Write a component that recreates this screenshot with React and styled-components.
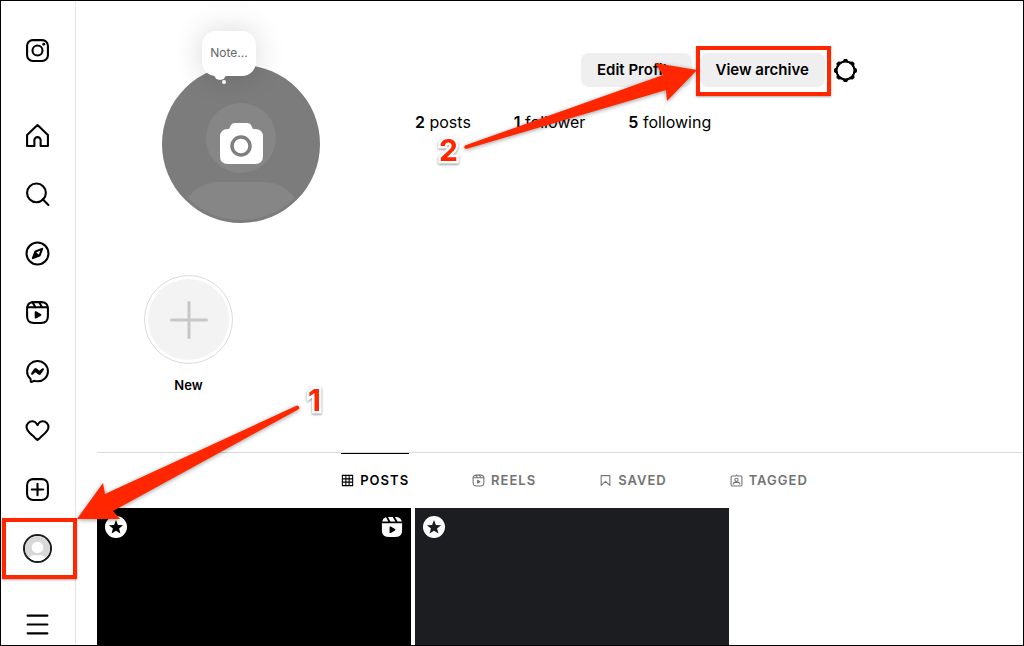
import React from "react";
import styled, {createGlobalStyle, css} from "styled-components";


const GlobalStyle = createGlobalStyle`
  * {
    box-sizing: border-box;
  }

  body {
    margin: 0;
    background: #fff;
    color: #000;
    font-family: Inter, "Liberation Sans", sans-serif;
    font-size: 14px;
  }

  svg {
    display: block;
  }
`

const Page = styled.div`
  position: relative;
  display: flex;
  height: 100vh;
  border: 1px solid #000;
  overflow: hidden;
`

const Sidebar = styled.nav`
  display: flex;
  flex-direction: column;
  flex: none;
  width: 75px;
  padding-right: 1px;
  border-right: 1px solid #e6e6e6;
`

const NavLink = styled.a`
  position: relative;
  display: flex;
  flex: none;
  align-items: center;
  justify-content: center;
  height: 59px;
  color: #000;
`

const LogoLink = styled(NavLink)`
  margin: 20px 0 26px;
`

const MenuButton = styled.button`
  display: flex;
  justify-content: center;
  margin-top: 34px;
  padding: 0;
  border: 0;
  background: none;
  color: #000;
`

const NavAvatar = styled.span`
  display: block;
  width: 29px;
  height: 29px;
  border: 2px solid #1c1c1c;
  border-radius: 50%;
  overflow: hidden;
`

const Highlight = styled.span`
  position: absolute;
  inset: ${props => props.$inset};
  border: 4px solid #ff2600;
  box-shadow: 0 1px 2px rgba(0, 0, 0, 0.35);
  pointer-events: none;
`

const Main = styled.main`
  display: flex;
  flex-direction: column;
  flex: 1;
  min-width: 0;
  padding-left: 21px;
`

const ProfileHeader = styled.header`
  display: flex;
  gap: 95px;
  padding: 52px 0 0 65px;
`

const AvatarButton = styled.button`
  position: relative;
  flex: none;
  width: 158px;
  height: 158px;
  margin-top: 12px;
  padding: 0;
  border: 0;
  border-radius: 50%;
  background: #7c7c7c;
`

const Note = styled.span`
  position: absolute;
  top: -34px;
  left: 40px;
  display: flex;
  align-items: center;
  justify-content: center;
  width: 54px;
  height: 45px;
  padding-bottom: 2px;
  border-radius: 14px;
  background: #fff;
  box-shadow: 0 0 30px rgba(0, 0, 0, 0.16);
  color: #666;
  font-family: Inter, "Liberation Sans", sans-serif;
  font-size: 12px;

  &::before,
  &::after {
    content: "";
    position: absolute;
    border-radius: 50%;
    background: #fff;
  }

  &::before {
    left: 12px;
    bottom: -4px;
    width: 12px;
    height: 12px;
  }

  &::after {
    left: 20px;
    bottom: -8px;
    width: 4px;
    height: 4px;
  }
`

const Info = styled.section`
  display: flex;
  flex-direction: column;
  gap: 25px;
`

const Actions = styled.div`
  display: flex;
  align-items: center;
  gap: 8px;
  padding-left: 166px;
`

const ActionButton = styled.button`
  position: relative;
  height: 34px;
  padding: 0 16px 1px;
  border: 0;
  border-radius: 8px;
  background: #efefef;
  color: #000;
  font-family: Inter, "Liberation Sans", sans-serif;
  font-size: 15px;
  font-weight: 600;
  white-space: nowrap;
`

const IconButton = styled.button`
  padding: 0;
  border: 0;
  background: none;
  color: #000;
`

const Stats = styled.ul`
  display: flex;
  gap: 43px;
  margin: 0;
  padding: 0;
  list-style: none;
  font-size: 16px;
  line-height: 20px;
  white-space: nowrap;

  b {
    font-weight: 600;
  }
`

const Highlights = styled.section`
  display: flex;
  padding: 52px 0 58px 47px;
`

const NewHighlight = styled.button`
  display: flex;
  flex-direction: column;
  align-items: center;
  gap: 12px;
  padding: 0;
  border: 0;
  background: none;
  color: #000;
  font-family: Inter, "Liberation Sans", sans-serif;
  font-size: 13px;
  font-weight: 600;
  line-height: 18px;
`

const Ring = styled.span`
  display: flex;
  align-items: center;
  justify-content: center;
  width: 89px;
  height: 89px;
  border: 1px solid #dbdbdb;
  border-radius: 50%;
`

const RingFill = styled.span`
  display: flex;
  align-items: center;
  justify-content: center;
  width: 81px;
  height: 81px;
  border-radius: 50%;
  background: #f3f3f3;
`

const Tabs = styled.div`
  display: flex;
  justify-content: center;
  gap: 63px;
  padding-left: 29px;
  border-top: 1px solid #dbdbdb;
`

const Tab = styled.a`
  display: flex;
  align-items: center;
  gap: 6px;
  height: 55px;
  padding-bottom: 2px;
  border-top: 1px solid transparent;
  color: #737373;
  font-size: 13px;
  font-weight: 600;
  letter-spacing: 1px;
  text-decoration: none;

  ${props => props.$active && css`
    border-top-color: #000;
    color: #000;
  `}
`

const Posts = styled.div`
  display: grid;
  grid-template-columns: repeat(3, 314px);
  gap: 4px;
`

const Post = styled.a`
  display: flex;
  align-items: flex-start;
  justify-content: space-between;
  aspect-ratio: 1;
  padding: 8px;
  background: ${props => props.$color};
  color: #fff;
`

const Arrows = styled.svg`
  position: absolute;
  top: -1px;
  left: -1px;
  pointer-events: none;
  filter: drop-shadow(0 1px 2px rgba(0, 0, 0, 0.4));
`

const Step = styled.span`
  position: absolute;
  top: ${props => props.$top}px;
  left: ${props => props.$left}px;
  color: #ff2600;
  font-family: Inter, "Liberation Sans", sans-serif;
  font-size: 30px;
  font-weight: 700;
  line-height: 30px;
  -webkit-text-stroke: 5px #fff;
  paint-order: stroke fill;
  filter: drop-shadow(0 1px 1px rgba(0, 0, 0, 0.45));
`

const Icon = ({size = 25, stroke = 2, children}) => (
    <svg width={size} height={size} viewBox="0 0 24 24" fill="none" stroke="currentColor"
         strokeWidth={stroke} strokeLinecap="round" strokeLinejoin="round" aria-hidden="true">
        {children}
    </svg>
);

const LogoIcon = () => (
    <Icon>
        <rect x="2" y="2" width="20" height="20" rx="5.5"/>
        <circle cx="12" cy="12" r="4.8"/>
        <circle cx="18" cy="6" r="1.4" fill="currentColor" stroke="none"/>
    </Icon>
);

const HomeIcon = () => (
    <Icon>
        <path d="M9.005 16.545a2.997 2.997 0 0 1 2.997-2.997A2.997 2.997 0 0 1 15 16.545V22h7V11.543L12 2 2 11.543V22h7.005Z"/>
    </Icon>
);

const SearchIcon = () => (
    <Icon>
        <path d="M20 10.500A9 9 0 1 1 11 1.500a9 9 0 0 1 9 9Z"/>
        <path d="M17 16.500 22.500 22"/>
    </Icon>
);

const ExploreIcon = () => (
    <Icon>
        <path d="M13.941 13.953 7.581 16.424 10.06 10.056 16.42 7.585Z"/>
        <path d="M10.06 10.056 13.949 13.945 7.581 16.424Z" fill="currentColor" stroke="none"/>
        <circle cx="12" cy="12" r="10.5"/>
    </Icon>
);

const ReelsIcon = ({size, stroke}) => (
    <Icon size={size} stroke={stroke}>
        <path d="M2.049 7.002h19.901M13.504 2.001l2.858 5.001M7.207 2.11l2.795 4.892"/>
        <path d="M2 12.001v3.449c0 2.849.698 4.006 1.606 4.945.94.908 2.098 1.607 4.946 1.607h6.896c2.848 0 4.006-.699 4.946-1.607.908-.939 1.606-2.096 1.606-4.945V8.552c0-2.848-.698-4.006-1.606-4.945C19.454 2.699 18.296 2 15.448 2H8.552c-2.848 0-4.006.699-4.946 1.607C2.698 4.546 2 5.704 2 8.552Z"/>
        <path d="M9.763 17.664a.908.908 0 0 1-.454-.787V11.63a.909.909 0 0 1 1.364-.788l4.545 2.624a.909.909 0 0 1 0 1.575l-4.545 2.624a.91.91 0 0 1-.91 0Z"
              fill="currentColor" stroke="none"/>
    </Icon>
);

const MessengerIcon = () => (
    <Icon stroke={1.9}>
        <path d="M12.003 2.001a9.705 9.705 0 1 1 0 19.4 10.876 10.876 0 0 1-2.895-.384.798.798 0 0 0-.533.04l-1.984.876a.801.801 0 0 1-1.123-.708l-.054-1.78a.806.806 0 0 0-.27-.569 9.49 9.49 0 0 1-3.14-7.175 9.65 9.65 0 0 1 10-9.7Z"/>
        <path d="M17.79 10.132a.659.659 0 0 0-.962-.873l-2.556 2.05a.63.63 0 0 1-.758.002L11.06 9.47a1.576 1.576 0 0 0-2.277.42l-2.567 3.98a.659.659 0 0 0 .961.875l2.556-2.049a.63.63 0 0 1 .759-.002l2.452 1.84a1.576 1.576 0 0 0 2.278-.42Z"
              fill="currentColor" strokeWidth="0.8"/>
    </Icon>
);

const HeartIcon = () => (
    <Icon>
        <path d="M16.792 3.104A5.5 5.5 0 0 1 22.5 8.822c0 3.072-2.952 5.559-5.497 7.822-2.512 2.243-4.565 4.169-5.003 4.452-.477-.309-2.843-2.523-5.003-4.452C4.441 14.372 1.5 11.867 1.5 8.822a5.5 5.5 0 0 1 5.708-5.718 4.21 4.21 0 0 1 3.675 1.941c.84 1.175.98 1.763 1.12 1.763s.278-.588 1.11-1.766a4.17 4.17 0 0 1 3.679-1.938Z"/>
    </Icon>
);

const CreateIcon = () => (
    <Icon>
        <rect x="2" y="2" width="20" height="20" rx="5.8"/>
        <path d="M6.545 12h10.91M12 6.545v10.91"/>
    </Icon>
);

const ProfileIcon = () => (
    <svg width="25" height="25" viewBox="0 0 26 26" aria-hidden="true">
        <rect width="26" height="26" fill="#d8d8d8"/>
        <circle cx="13" cy="12" r="6" fill="#fff"/>
        <path d="M5 26v-3q1-3 4-3h8q3 0 4 3v3Z" fill="#fff"/>
    </svg>
);

const MenuIcon = () => (
    <Icon>
        <path d="M2.500 3.5h19M2.500 12h19M2.500 20.5h19"/>
    </Icon>
);

const GearIcon = () => (
    <Icon>
        <circle cx="12" cy="12" r="8.635"/>
        <path d="M14.232 3.656a1.269 1.269 0 0 1-.796-.66L12.93 2h-1.86l-.505.996a1.269 1.269 0 0 1-.796.66m-.001 16.688a1.269 1.269 0 0 1 .796.66l.505.996h1.862l.505-.996a1.269 1.269 0 0 1 .796-.66M3.656 9.768a1.269 1.269 0 0 1-.66.796L2 11.07v1.862l.996.505a1.269 1.269 0 0 1 .66.796m16.688-.001a1.269 1.269 0 0 1 .66-.796L22 12.93v-1.86l-.996-.505a1.269 1.269 0 0 1-.66-.796M7.678 4.522a1.269 1.269 0 0 1-1.03.096l-1.06-.348L4.27 5.587l.348 1.062a1.269 1.269 0 0 1-.096 1.03m11.8 11.799a1.269 1.269 0 0 1 1.03-.096l1.06.348 1.318-1.317-.348-1.062a1.269 1.269 0 0 1 .096-1.03m-14.956.001a1.269 1.269 0 0 1 .096 1.03l-.348 1.06 1.317 1.318 1.062-.348a1.269 1.269 0 0 1 1.03.096m11.799-11.8a1.269 1.269 0 0 1-.096-1.03l.348-1.06-1.317-1.318-1.062.348a1.269 1.269 0 0 1-1.03-.096"/>
    </Icon>
);

const GridIcon = () => (
    <Icon size={13}>
        <path d="M2.500 2.500h19v19h-19zM2.500 9h19M2.500 15h19M9 2.500v19M15 2.500v19"/>
    </Icon>
);

const SavedIcon = () => (
    <Icon size={13}>
        <path d="M20 21 12 13.44 4 21V3h16Z"/>
    </Icon>
);

const TaggedIcon = () => (
    <Icon size={13}>
        <path d="M10.2 3.8 12 2l1.8 1.8H20a2 2 0 0 1 2 2V20a2 2 0 0 1-2 2H4a2 2 0 0 1-2-2V5.8a2 2 0 0 1 2-2Z"/>
        <circle cx="12" cy="10.8" r="3"/>
        <path d="M6 18.5c0-2 1.5-3 3.2-3h5.6c1.7 0 3.2 1 3.2 3"/>
    </Icon>
);

const StarIcon = ({color}) => (
    <svg width="22" height="22" viewBox="0 0 22 22" aria-hidden="true">
        <circle cx="11" cy="11" r="11" fill="#fff"/>
        <path d="M11 4l1.9 4.9 5.2.3-4 3.3 1.3 5.1-4.4-2.8-4.4 2.8 1.3-5.1-4-3.3 5.2-.3Z" fill={color}/>
    </svg>
);

const ClipIcon = () => (
    <svg width="22" height="22" viewBox="0 0 24 24" fill="currentColor" fillRule="evenodd" aria-hidden="true">
        <path d="m12.823 1 2.974 5.002h-5.58l-2.65-4.971c.206-.013.419-.022.642-.027L8.55 1Zm2.327 0h.298c3.06 0 4.468.754 5.64 1.887a6.007 6.007 0 0 1 1.596 2.82l.07.295h-4.629L15.15 1Zm-9.667.377L7.95 6.002H1.244a6.01 6.01 0 0 1 3.942-4.53Zm9.735 12.834-4.545-2.624a.909.909 0 0 0-1.356.668l-.008.12v5.248a.91.91 0 0 0 1.255.84l.109-.053 4.545-2.624a.909.909 0 0 0 .1-1.507l-.1-.068Zm-14.2-6.209h21.964l.015.36.003.189v6.899c0 3.061-.755 4.469-1.888 5.64-1.151 1.114-2.5 1.856-5.33 1.909l-.334.003H8.551c-3.06 0-4.467-.755-5.64-1.889-1.114-1.15-1.854-2.498-1.908-5.33L1 15.45V8.551l.003-.189Z"/>
    </svg>
);

const DefaultAvatar = () => (
    <svg width="158" height="158" viewBox="0 0 158 158" aria-hidden="true">
        <defs>
            <clipPath id="avatar"><circle cx="79" cy="79" r="76"/></clipPath>
        </defs>
        <circle cx="79" cy="73" r="35" fill="#868686"/>
        <path d="M22 140q10-23 36-23h42q26 0 36 23v18H22Z" fill="#868686" clipPath="url(#avatar)"/>
        <path d="M69 60q1-2 4-2h12q3 0 4 2l2 4h2q8 0 8 8v19q0 8-8 8H66q-8 0-8-8V72q0-8 8-8h1Z" fill="#fff"/>
        <circle cx="79" cy="81" r="9" fill="#fff" stroke="#7f7f7f" strokeWidth="3.5"/>
    </svg>
);

const PlusIcon = () => (
    <svg width="38" height="38" viewBox="0 0 38 38" stroke="#c7c7c7" strokeWidth="3" strokeLinecap="round" aria-hidden="true">
        <path d="M1.5 19h35M19 1.5v35"/>
    </svg>
);

const navItems = [
    {label: "Home", icon: <HomeIcon/>},
    {label: "Search", icon: <SearchIcon/>},
    {label: "Explore", icon: <ExploreIcon/>},
    {label: "Reels", icon: <ReelsIcon/>},
    {label: "Messages", icon: <MessengerIcon/>},
    {label: "Notifications", icon: <HeartIcon/>},
    {label: "Create", icon: <CreateIcon/>}
];

const tabs = [
    {label: "POSTS", icon: <GridIcon/>},
    {label: "REELS", icon: <ReelsIcon size={13}/>},
    {label: "SAVED", icon: <SavedIcon/>},
    {label: "TAGGED", icon: <TaggedIcon/>}
];

const App = () => {
    const [tab, setTab] = React.useState("POSTS");

    return (
        <>
            <GlobalStyle/>
            <Page>
                <Sidebar>
                    <LogoLink href="#" aria-label="Instagram"><LogoIcon/></LogoLink>
                    {navItems.map(item => (
                        <NavLink href="#" key={item.label} aria-label={item.label}>{item.icon}</NavLink>
                    ))}
                    <NavLink href="#" aria-label="Profile">
                        <NavAvatar><ProfileIcon/></NavAvatar>
                        <Highlight $inset="-1px -3px -1px 1px"/>
                    </NavLink>
                    <MenuButton aria-label="More"><MenuIcon/></MenuButton>
                </Sidebar>

                <Main>
                    <ProfileHeader>
                        <AvatarButton aria-label="Add a profile photo">
                            <DefaultAvatar/>
                            <Note>Note...</Note>
                        </AvatarButton>
                        <Info>
                            <Actions>
                                <ActionButton>Edit Profile</ActionButton>
                                <ActionButton>
                                    View archive
                                    <Highlight $inset="-7px -6px -9px -4px"/>
                                </ActionButton>
                                <IconButton aria-label="Options"><GearIcon/></IconButton>
                            </Actions>
                            <Stats>
                                <li><b>2</b> posts</li>
                                <li><b>1</b> follower</li>
                                <li><b>5</b> following</li>
                            </Stats>
                        </Info>
                    </ProfileHeader>

                    <Highlights>
                        <NewHighlight>
                            <Ring><RingFill><PlusIcon/></RingFill></Ring>
                            New
                        </NewHighlight>
                    </Highlights>

                    <Tabs>
                        {tabs.map(({label, icon}) => (
                            <Tab href="#" key={label} $active={tab === label} onClick={() => {setTab(label)}}>
                                {icon}
                                {label}
                            </Tab>
                        ))}
                    </Tabs>
                    <Posts>
                        <Post href="#" $color="#000" aria-label="Reel">
                            <StarIcon color="#000"/>
                            <ClipIcon/>
                        </Post>
                        <Post href="#" $color="#1c1d21" aria-label="Post">
                            <StarIcon color="#1c1d21"/>
                        </Post>
                    </Posts>
                </Main>

                <Arrows width="720" height="540" viewBox="0 0 720 540" fill="#ff2600" aria-hidden="true">
                    <path d="M77 519 103 483 105 494 297 405.5Q300 406 299 409L113 511 120 519Z"/>
                    <path d="M697 70 655 63 663 75 465 145.5Q463 148 466 149L666 90 667 101Z"/>
                </Arrows>
                <Step $top={384} $left={307}>1</Step>
                <Step $top={134} $left={438}>2</Step>
            </Page>
        </>
    );
}

export default App;
